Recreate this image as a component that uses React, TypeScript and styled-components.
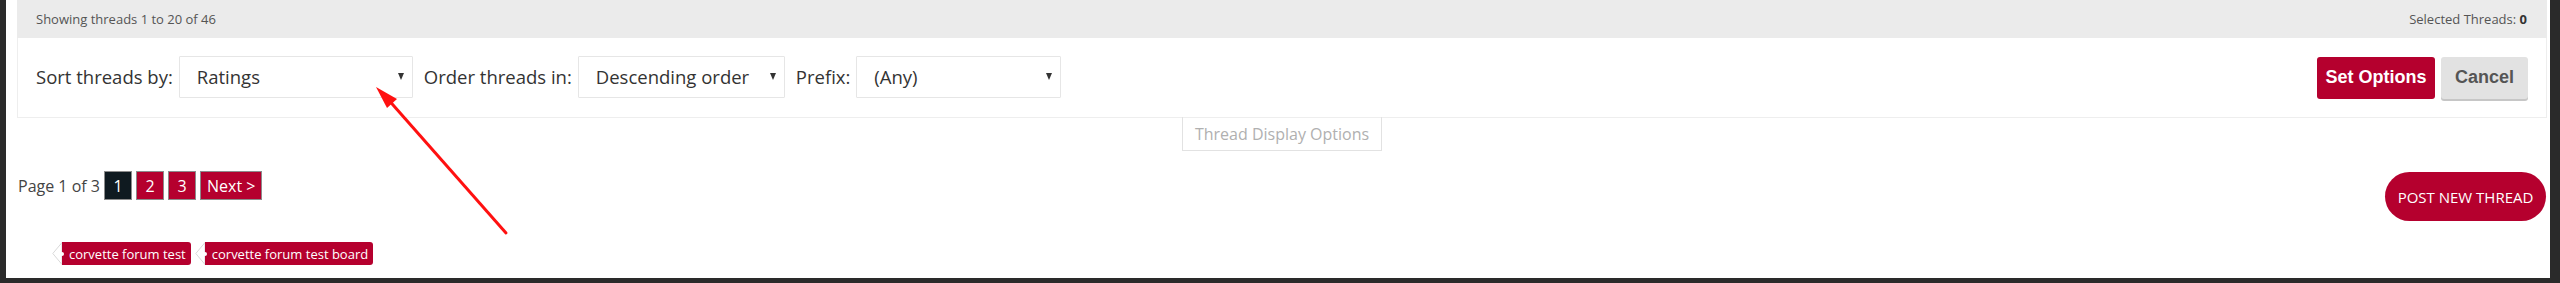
import React from "react";
import styled, { createGlobalStyle } from "styled-components";

const CRIMSON = "#b5002e";

const GlobalStyle = createGlobalStyle`
  html, body {
    margin: 0;
    padding: 0;
    background: #2a2a2a;
  }
  body {
    font-family: "Open Sans", "Noto Sans", sans-serif;
    color: #333;
  }
  * { box-sizing: border-box; }
`;

const Page = styled.div`
  position: relative;
  margin: 0 10px 0 6px;
  height: 278px;
  background: #ffffff;
  padding: 0 3px 0 11px;
  display: flex;
  flex-direction: column;
`;

const InfoBar = styled.div`
  height: 38px;
  background: #ebebeb;
  display: flex;
  align-items: center;
  justify-content: space-between;
  padding: 0 20px 0 19px;
  font-size: 13px;
  color: #555;
  b { color: #333; font-weight: 700; }
`;

const OptionsPanel = styled.div`
  height: 80px;
  border: 1px solid #eeeeee;
  border-top: none;
  display: flex;
  align-items: center;
  padding: 0 18px 2px 18px;
`;

const Label = styled.span`
  font-size: 18.5px;
  color: #333;
  margin-right: 6px;
  white-space: nowrap;
`;

const SelectBox = styled.div<{ $w: number }>`
  width: ${(p) => p.$w}px;
  height: 42px;
  border: 1px solid #e6e6e6;
  border-radius: 1px;
  display: flex;
  align-items: center;
  padding: 0 8px 0 17px;
  margin-right: 11px;
  font-size: 18.5px;
  color: #333;
  white-space: nowrap;
`;

const Caret = styled.span`
  margin-left: auto;
  width: 0;
  height: 0;
  border-left: 3.5px solid transparent;
  border-right: 3.5px solid transparent;
  border-top: 7px solid #333;
`;

const Spacer = styled.div`
  flex: 1;
`;

const ActionButton = styled.button<{ $primary?: boolean }>`
  height: 42px;
  width: ${(p) => (p.$primary ? 118 : 87)}px;
  padding: 0;
  margin: 2px 0 0 ${(p) => (p.$primary ? 0 : 6)}px;
  border: none;
  border-radius: 3px;
  font-family: "Liberation Sans", Arial, sans-serif;
  font-weight: 700;
  font-size: 18px;
  color: ${(p) => (p.$primary ? "#fff" : "#555")};
  background: ${(p) => (p.$primary ? CRIMSON : "#e2e2e2")};
  box-shadow: ${(p) => (p.$primary ? "none" : "0 2px 0 #c6c6c6")};
  cursor: pointer;
`;

const TabRow = styled.div`
  display: flex;
  justify-content: center;
  margin-top: -1px;
`;

const Tab = styled.div`
  height: 34px;
  padding: 0 12px;
  border: 1px solid #e2e2e2;
  border-top: none;
  display: flex;
  align-items: center;
  font-size: 16px;
  color: #b0b0b0;
  white-space: nowrap;
`;

const PagerRow = styled.div`
  margin-top: 20px;
  display: flex;
  justify-content: space-between;
  align-items: flex-start;
`;

const Pager = styled.div`
  display: flex;
  align-items: center;
  padding-left: 1px;
`;

const PageText = styled.span`
  font-size: 16px;
  color: #444;
  margin-right: 4px;
`;

const PageBox = styled.a<{ $current?: boolean }>`
  height: 29px;
  min-width: 28px;
  padding: 0 6px;
  margin-right: 4px;
  display: flex;
  align-items: center;
  justify-content: center;
  border: 1px solid #8c8c8c;
  background: ${(p) => (p.$current ? "#0f1a20" : CRIMSON)};
  color: #fff;
  font-size: 16px;
  text-decoration: none;
`;

const PostButton = styled.button`
  margin: 1px 1px 0 0;
  width: 161px;
  height: 49px;
  border: none;
  border-radius: 25px;
  background: ${CRIMSON};
  color: #fff;
  font-family: "Open Sans", sans-serif;
  font-size: 15px;
  cursor: pointer;
`;

const TagRow = styled.div`
  margin-top: 21px;
  padding-left: 35px;
  display: flex;
  gap: 4px;
`;

const Tag = styled.a`
  display: flex;
  align-items: stretch;
  height: 23px;
  text-decoration: none;
`;

const TagBody = styled.span`
  position: relative;
  display: flex;
  align-items: center;
  padding: 0 5px 0 7px;
  background: ${CRIMSON};
  color: #fff;
  font-size: 13px;
  border-radius: 0 3px 3px 0;
  white-space: nowrap;
  &::after {
    content: "";
    position: absolute;
    left: -2px;
    top: 9.5px;
    width: 4px;
    height: 4px;
    border-radius: 50%;
    background: #fff;
  }
`;

const Overlay = styled.svg`
  position: absolute;
  left: 0;
  top: 0;
  width: 100%;
  height: 100%;
  pointer-events: none;
`;

const TagPoint = () => (
  <svg width="10" height="23" viewBox="0 0 10 23">
    <polygon points="10,0.5 0.8,11.5 10,22.5" fill="#fff" stroke="#d9d9d9" strokeWidth="1" />
  </svg>
);

const tags = ["corvette forum test", "corvette forum test board"];

export default function App() {
  return (
    <>
      <GlobalStyle />
      <Page>
        <InfoBar>
          <span>Showing threads 1 to 20 of 46</span>
          <span>
            Selected Threads: <b>0</b>
          </span>
        </InfoBar>
        <OptionsPanel>
          <Label>Sort threads by:</Label>
          <SelectBox $w={234}>
            Ratings
            <Caret />
          </SelectBox>
          <Label>Order threads in:</Label>
          <SelectBox $w={207}>
            Descending order
            <Caret />
          </SelectBox>
          <Label>Prefix:</Label>
          <SelectBox $w={205}>
            (Any)
            <Caret />
          </SelectBox>
          <Spacer />
          <ActionButton $primary>Set Options</ActionButton>
          <ActionButton>Cancel</ActionButton>
        </OptionsPanel>
        <TabRow>
          <Tab>Thread Display Options</Tab>
        </TabRow>
        <PagerRow>
          <Pager>
            <PageText>Page 1 of 3</PageText>
            <PageBox $current>1</PageBox>
            <PageBox>2</PageBox>
            <PageBox>3</PageBox>
            <PageBox>Next &gt;</PageBox>
          </Pager>
          <PostButton>POST NEW THREAD</PostButton>
        </PagerRow>
        <TagRow>
          {tags.map((t) => (
            <Tag key={t}>
              <TagPoint />
              <TagBody>{t}</TagBody>
            </Tag>
          ))}
        </TagRow>
        <Overlay viewBox="0 0 2544 278" preserveAspectRatio="none">
          <line x1="500" y1="233" x2="380" y2="97" stroke="#ff1010" strokeWidth="3" strokeLinecap="round" />
          <polygon points="370,87 391,99 381,108" fill="#ff1010" />
        </Overlay>
      </Page>
    </>
  );
}
